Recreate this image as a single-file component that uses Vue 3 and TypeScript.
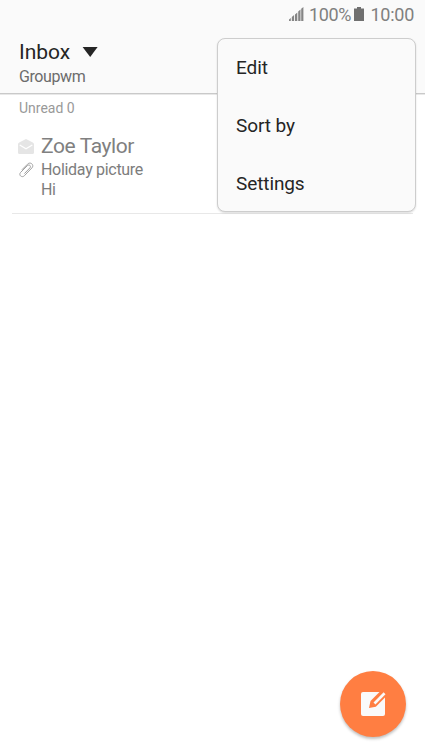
<script setup lang="ts">
import { ref } from 'vue'

interface Mail {
  sender: string
  subject: string
  preview: string
}

const menu = ref<string[]>(['Edit', 'Sort by', 'Settings'])
const mails = ref<Mail[]>([{ sender: 'Zoe Taylor', subject: 'Holiday picture', preview: 'Hi' }])
</script>

<template>
  <main class="screen">
    <header class="top">
      <div class="status">
        <svg class="signal" width="15" height="14" viewBox="0 0 15 14" fill="#858585">
          <path d="M0 14v-1.500L1.800 11v3zM2.800 14v-4l2.300-2V14zM6 14V7.400l2.300-2V14zM9.200 14V4.600l2.300-2V14zM12.200 14V1.800L14.400 0v14z" />
        </svg>
        <span class="percent">100%</span>
        <svg class="battery" width="10" height="14" viewBox="0 0 10 14" fill="#707070">
          <path d="M3 0h4v1.400h3V14H0V1.400h3z" />
        </svg>
        <span class="clock">10:00</span>
      </div>
      <div class="folder">
        <h1>Inbox</h1>
        <svg width="16" height="10" viewBox="0 0 16 10" fill="#252525"><path d="M.600 0h15L8.200 10z" /></svg>
      </div>
      <div class="account">Groupwm</div>
    </header>

    <div class="unread">Unread 0</div>
    <section class="list">
      <article v-for="mail in mails" :key="mail.sender" class="mail">
        <div class="icons">
          <svg width="16" height="15" viewBox="0 0 16 15">
            <path d="M1.200 3.400 8 0l6.800 3.400Q16 4 16 5.200v8.300Q16 15 14.500 15h-13Q0 15 0 13.500V5.200Q0 4 1.200 3.400z" fill="#e5e5e5" />
            <path d="m1.700 6 6.300 3.700L14.300 6" fill="none" stroke="#fff" stroke-width="1.300" />
          </svg>
          <svg class="clip" width="15" height="16" viewBox="0 0 15 16" fill="none" stroke="#a0a0a0" stroke-width="1" stroke-linecap="round">
            <path d="M3.200 7.500 8.500 2.200C11.500-.800 15.600 3 12.900 5.900L5.400 13.700C3 16.200-.700 13.200 1.500 10.500L8.300 3.700C10.200 1.900 12.500 4 10.900 5.900L5.700 11.300" />
          </svg>
        </div>
        <div class="lines">
          <div class="sender">{{ mail.sender }}</div>
          <div class="text">{{ mail.subject }}</div>
          <div class="text">{{ mail.preview }}</div>
        </div>
      </article>
    </section>

    <nav class="menu">
      <button v-for="item in menu" :key="item" type="button">{{ item }}</button>
    </nav>

    <button class="compose" type="button" aria-label="Compose">
      <svg width="26" height="26" viewBox="0 0 26 26">
        <rect x="1" y="1" width="24" height="24" rx="2" fill="#fafafa" />
        <path d="M9 17 10.500 10 20.500 0H26v5.500L15.800 15.700z" fill="#ff7e42" />
        <path d="m13.500 11.600 10.100-10.300 1.900 1.900-10.100 10.300z" fill="#fafafa" />
        <path d="m12.700 10.200 9-9.200h1.500L13.400 10.900z" fill="#ff7e42" />
      </svg>
    </button>
  </main>
</template>

<style>
body {
  margin: 0;
  background: #fff;
}
</style>

<style scoped>
.screen {
  position: relative;
  box-sizing: border-box;
  height: 756px;
  overflow: hidden;
  background: #fff;
  font-family: Roboto, sans-serif;
}
.top {
  box-sizing: border-box;
  height: 94px;
  background: #fafafa;
  border-bottom: 1px solid #c9c9c9;
  box-shadow: 0 1px #e8e8e8;
}
.status {
  display: flex;
  align-items: center;
  justify-content: flex-end;
  height: 28px;
  padding-right: 11px;
  color: #808080;
  font-size: 18px;
  line-height: 28px;
}
.percent {
  padding-top: 1px;
  letter-spacing: -0.4px;
}
.clock {
  padding-top: 1px;
  letter-spacing: -0.25px;
}
.signal {
  margin-right: 5px;
}
.battery {
  margin: 0 6px 0 3.500px;
}
.folder {
  display: flex;
  align-items: center;
  gap: 12px;
  height: 24px;
  padding: 12px 0 0 19px;
}
h1 {
  margin: 0;
  color: #252525;
  font-size: 21px;
  font-weight: 400;
  line-height: 24px;
}
.account {
  padding: 3px 0 0 19px;
  color: #6c6c6c;
  font-size: 16px;
  letter-spacing: -0.4px;
  line-height: 20px;
}
.unread {
  height: 38px;
  padding-left: 19px;
  color: #999;
  font-size: 14px;
  line-height: 28px;
}
.list {
  padding: 0 12px;
}
.mail {
  display: flex;
  box-sizing: border-box;
  height: 82px;
  padding-left: 6px;
  border-bottom: 1px solid #e8e8e8;
}
.icons {
  display: flex;
  flex-direction: column;
  width: 23px;
  padding-top: 7px;
}
.clip {
  margin: 8px 0 0 1px;
}
.sender {
  height: 28px;
  color: #808080;
  font-size: 21px;
  letter-spacing: -0.4px;
  line-height: 28px;
}
.text {
  height: 20px;
  color: #7d7d7d;
  font-size: 16px;
  letter-spacing: -0.3px;
  line-height: 20px;
}
.menu {
  position: absolute;
  top: 38px;
  left: 217px;
  display: flex;
  flex-direction: column;
  box-sizing: border-box;
  width: 199px;
  height: 174px;
  border: 1px solid #cdcdcd;
  border-radius: 8px;
  background: #fafafa;
  box-shadow: 0 1px 2px rgb(0 0 0 / 14%);
}
.menu button {
  flex: none;
  height: 58px;
  padding: 0 0 2px 18px;
  border: 0;
  background: none;
  color: #252525;
  font: 19px Roboto, sans-serif;
  letter-spacing: -0.1px;
  text-align: left;
}
.compose {
  position: absolute;
  top: 671px;
  left: 340px;
  display: flex;
  align-items: center;
  justify-content: center;
  width: 66px;
  height: 66px;
  padding: 0;
  border: 0;
  border-radius: 50%;
  background: #ff7e42;
  box-shadow: 0 2px 3px rgb(0 0 0 / 25%);
}
</style>
